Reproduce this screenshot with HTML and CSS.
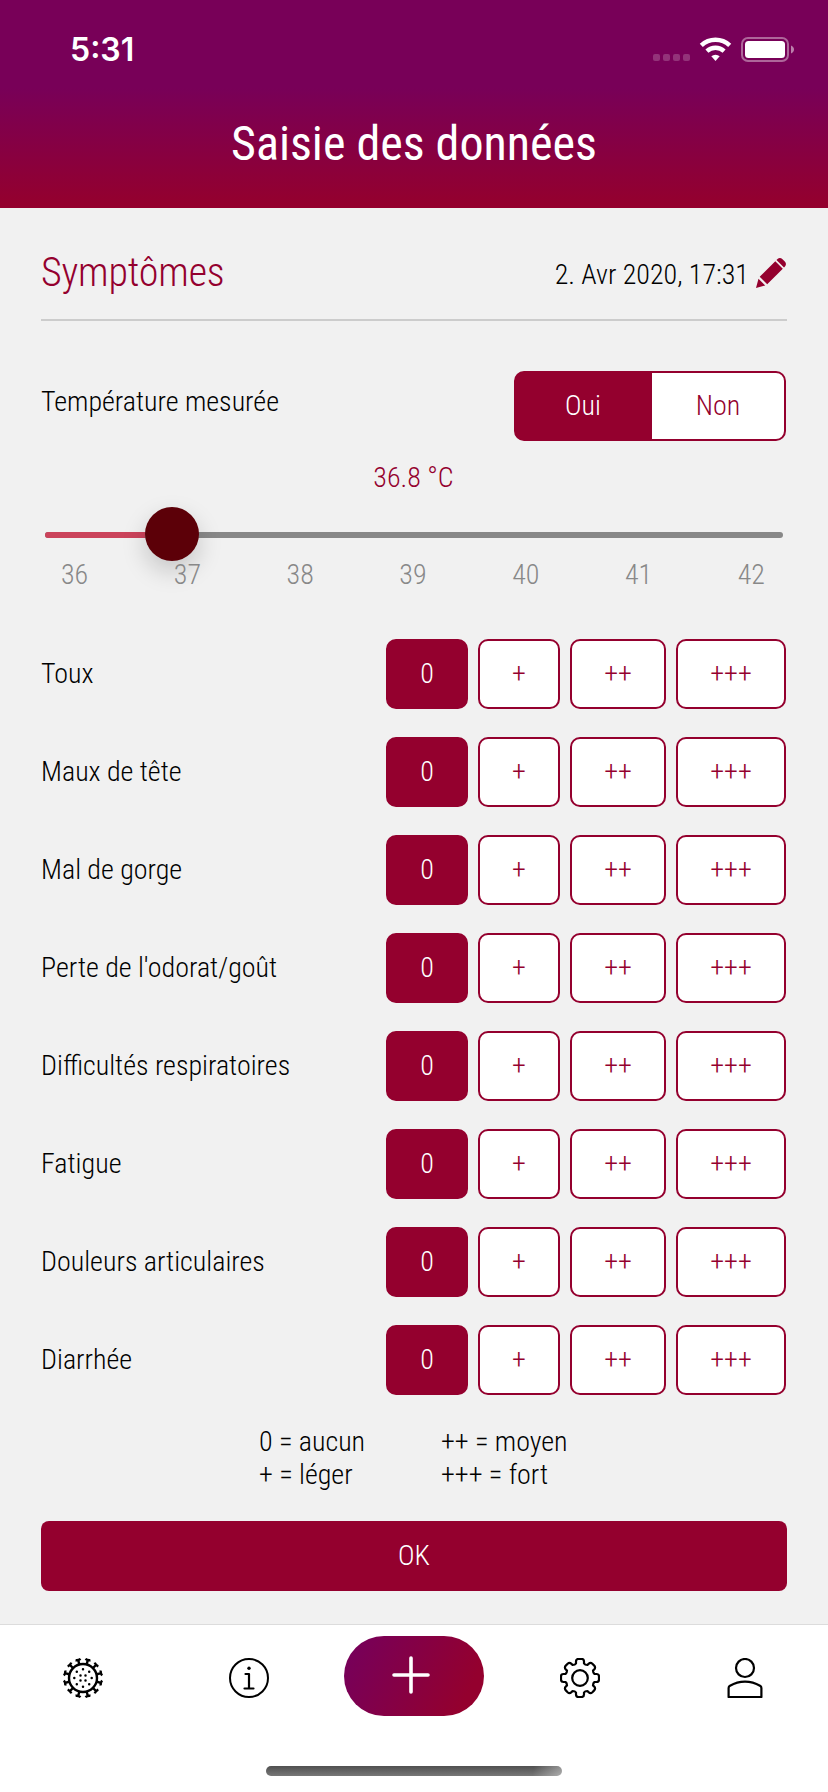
FILE: index.html
```html
<!DOCTYPE html>
<html lang="fr">
<head>
<meta charset="utf-8">
<title>Saisie des données</title>
<link rel="stylesheet" href="styles.css">
</head>
<body>
<header class="header">
  <div class="status">
    <span class="time">5:31</span>
    <svg class="status-icons" width="142" height="28" viewBox="0 0 142 28">
      <g fill="#fff" fill-opacity=".2"><rect x="0" y="17" width="7" height="7" rx="2"/><rect x="10" y="17" width="7" height="7" rx="2"/><rect x="20" y="17" width="7" height="7" rx="2"/><rect x="30" y="17" width="7" height="7" rx="2"/></g>
      <g fill="none" stroke="#fff" stroke-width="4.4"><path d="M48.3 8.4a20.500 20.500 0 0 1 28.400 0"/><path d="M53.900 14.100a12.600 12.600 0 0 1 17.200 0"/></g>
      <path d="M58.300 19.300a6.300 6.300 0 0 1 8.400 0L62.500 24z" fill="#fff"/>
      <rect x="89" y="1" width="46" height="23" rx="6" fill="none" stroke="#fff" stroke-opacity=".4" stroke-width="2"/>
      <rect x="92" y="4" width="40" height="17" rx="3.500" fill="#fff"/>
      <path d="M138 8.500c4 1.500 4 6.500 0 8z" fill="#fff" fill-opacity=".5"/>
    </svg>
  </div>
  <h1 class="title">Saisie des données</h1>
</header>
<main class="content">
  <div class="section-head">
    <h2 class="section-title">Symptômes</h2>
    <div class="date"><span>2. Avr 2020, 17:31</span>
      <svg width="30" height="30" viewBox="0 0 30 30" fill="#94002e"><path d="M2.500 20.800 9.200 27.500 0 30zM3.700 18.800 19.300 3.200 26.800 10.700 11.200 26.300zM20.500 2 21.500 1Q24-1 26.500 1.200L28.800 3.500Q31 6 29 8.500L28 9.500z"/></svg>
    </div>
  </div>
  <div class="temp-row">
    <span class="label">Température mesurée</span>
    <div class="toggle"><span class="half on">Oui</span><span class="half">Non</span></div>
  </div>
  <div class="temp-value">36.8 °C</div>
  <div class="slider"><div class="fill"></div><div class="thumb"></div></div>
  <div class="scale"><span>36</span><span>37</span><span>38</span><span>39</span><span>40</span><span>41</span><span>42</span></div>
  <div class="symptoms">
    <div class="row"><span class="label">Toux</span><b class="opt on">0</b><b class="opt">+</b><b class="opt">++</b><b class="opt">+++</b></div>
    <div class="row"><span class="label">Maux de tête</span><b class="opt on">0</b><b class="opt">+</b><b class="opt">++</b><b class="opt">+++</b></div>
    <div class="row"><span class="label">Mal de gorge</span><b class="opt on">0</b><b class="opt">+</b><b class="opt">++</b><b class="opt">+++</b></div>
    <div class="row"><span class="label">Perte de l'odorat/goût</span><b class="opt on">0</b><b class="opt">+</b><b class="opt">++</b><b class="opt">+++</b></div>
    <div class="row"><span class="label">Difficultés respiratoires</span><b class="opt on">0</b><b class="opt">+</b><b class="opt">++</b><b class="opt">+++</b></div>
    <div class="row"><span class="label">Fatigue</span><b class="opt on">0</b><b class="opt">+</b><b class="opt">++</b><b class="opt">+++</b></div>
    <div class="row"><span class="label">Douleurs articulaires</span><b class="opt on">0</b><b class="opt">+</b><b class="opt">++</b><b class="opt">+++</b></div>
    <div class="row"><span class="label">Diarrhée</span><b class="opt on">0</b><b class="opt">+</b><b class="opt">++</b><b class="opt">+++</b></div>
  </div>
  <div class="legend"><span>0 = aucun</span><span>++ = moyen</span><span>+ = léger</span><span>+++ = fort</span></div>
  <div class="ok">OK</div>
</main>
<nav class="tabs">
  <div class="tab">
    <svg width="40" height="40" viewBox="-20 -20 40 40">
      <defs><g id="spike"><path d="M0-14.500V-18.500M-2.600-19.100Q0-17.900 2.600-19.100" fill="none" stroke="#000" stroke-width="2.400"/></g></defs>
      <circle r="14" fill="none" stroke="#000" stroke-width="2.400"/>
      <g><use href="#spike" transform="rotate(15)"/><use href="#spike" transform="rotate(45)"/><use href="#spike" transform="rotate(75)"/><use href="#spike" transform="rotate(105)"/><use href="#spike" transform="rotate(135)"/><use href="#spike" transform="rotate(165)"/><use href="#spike" transform="rotate(195)"/><use href="#spike" transform="rotate(225)"/><use href="#spike" transform="rotate(255)"/><use href="#spike" transform="rotate(285)"/><use href="#spike" transform="rotate(315)"/><use href="#spike" transform="rotate(345)"/></g>
      <path d="M0-8.700h0M6.200-6.200h0M8.700 0h0M6.200 6.200h0M0 8.700h0M-6.200 6.200h0M-8.700 0h0M-6.200-6.200h0M-2.500-2.500h0M2.500-2.500h0M2.500 2.500h0M-2.500 2.500h0" stroke="#000" stroke-width="2.500" stroke-linecap="round"/>
    </svg>
  </div>
  <div class="tab tab-info">
    <svg width="40" height="40" viewBox="-20 -20 40 40"><circle r="19" fill="none" stroke="#000" stroke-width="2"/><circle cx="0" cy="-9.800" r="1.700"/><path d="M-3.500-4H0V10.500M-4.500 10.500H4.500" fill="none" stroke="#000" stroke-width="2.200" stroke-linecap="round" stroke-linejoin="round"/></svg>
  </div>
  <div class="tab"><div class="add"><svg width="38" height="38" viewBox="0 0 38 38"><path d="M19 2V36M2 19H36" stroke="#fff" stroke-width="3.600" stroke-linecap="round"/></svg></div></div>
  <div class="tab">
    <svg width="40" height="40" viewBox="-20 -20 40 40" fill="none" stroke="#000" stroke-width="2.200" stroke-linejoin="round"><circle r="7.800"/><path d="M-4-14.500V-16.500Q-4-19-1.500-19H1.500Q4-19 4-16.500V-14.500Q5-13 7.400-13L8.800-14.400Q10.600-15.800 12.400-14.200L14.200-12.400Q15.800-10.600 14.400-8.800L13-7.400Q13-5 14.500-4H16.500Q19-4 19-1.500V1.500Q19 4 16.500 4H14.500Q13 5 13 7.400L14.400 8.800Q15.800 10.600 14.200 12.400L12.400 14.200Q10.600 15.800 8.800 14.400L7.400 13Q5 13 4 14.500V16.500Q4 19 1.500 19H-1.500Q-4 19-4 16.500V14.500Q-5 13-7.400 13L-8.800 14.400Q-10.600 15.800-12.400 14.200L-14.200 12.400Q-15.800 10.600-14.400 8.800L-13 7.400Q-13 5-14.500 4H-16.500Q-19 4-19 1.500V-1.500Q-19-4-16.500-4H-14.500Q-13-5-13-7.400L-14.400-8.800Q-15.800-10.600-14.200-12.400L-12.400-14.200Q-10.600-15.800-8.800-14.400L-7.400-13Q-5-13-4-14.500z"/></svg>
  </div>
  <div class="tab">
    <svg width="40" height="40" viewBox="-20 -20 40 40" fill="none" stroke="#000" stroke-width="2.200" stroke-linejoin="round"><circle cy="-10" r="9"/><path d="M-16.400 19V10Q-16.400 8.500-15 7.700Q-8 3.600 0 3.600T15 7.700Q16.400 8.500 16.400 10V19z"/></svg>
  </div>
  <div class="home"></div>
</nav>
</body>
</html>
```
FILE: styles.css
```css
* { box-sizing: border-box; }
body {
  margin: 0;
  width: 828px;
  height: 1792px;
  overflow: hidden;
  display: flex;
  flex-direction: column;
  background: #f1f1f1;
  color: #000;
  font: 300 28px/34px "Roboto Condensed", Roboto, sans-serif;
  font-stretch: 75%;
}
.header {
  height: 208px;
  color: #fff;
  background: linear-gradient(#780058 88px, #94002e 204px);
}
.status {
  height: 98px;
  padding: 33px 33px 0 70px;
  display: flex;
  justify-content: space-between;
}
.time { font: 600 32px/34px Inter, sans-serif; }
.status-icons { margin-top: 4px; }
.title {
  margin: 18px 0 0;
  font-size: 48px;
  line-height: 56px;
  font-weight: 400;
  text-align: center;
}
.content {
  height: 1416px;
  padding: 0 41px;
  display: flex;
  flex-direction: column;
}
.section-head {
  height: 113px;
  padding-top: 41px;
  border-bottom: 2px solid #ccc;
  display: flex;
  justify-content: space-between;
}
.section-title {
  margin: 0;
  font-size: 40px;
  line-height: 48px;
  font-weight: 300;
  letter-spacing: -.15px;
  color: #94002e;
}
.date { display: flex; gap: 7px; padding: 9px 1px 0 0; }
.temp-row {
  margin-top: 50px;
  height: 70px;
  padding-right: 1px;
  display: flex;
  justify-content: space-between;
}
.temp-row .label { padding-top: 14px; }
.toggle {
  width: 272px;
  display: flex;
  border: 2px solid #94002e;
  border-radius: 10px;
  overflow: hidden;
  background: linear-gradient(90deg, #94002e 50%, #fff 50%);
  color: #94002e;
}
.half { flex: 0 0 136px; padding-right: 2px; line-height: 66px; text-align: center; }
.half + .half { flex-basis: 132px; padding-right: 0; }
.on { background: #94002e; color: #fff; }
.temp-value { margin-top: 20px; padding-right: 1px; color: #94002e; text-align: center; }
.slider {
  margin: 37px 4px 0;
  height: 6px;
  border-radius: 3px;
  background: #888;
  display: flex;
  align-items: center;
}
.fill { flex: 0 0 100px; height: 6px; border-radius: 3px 0 0 3px; background: #cb435b; }
.thumb {
  flex: 0 0 54px;
  height: 54px;
  margin-top: -2px;
  border-radius: 50%;
  background: #5c0008;
  box-shadow: 0 10px 24px rgba(0, 0, 0, .18);
}
.scale {
  margin: 20px 0 0 17px;
  width: 734px;
  display: flex;
  justify-content: space-between;
  padding: 0 27px 0 3px;
  color: #888;
}
.symptoms { margin-top: 47px; display: flex; flex-direction: column; gap: 28px; }
.row {
  height: 70px;
  padding-right: 1px;
  display: grid;
  grid-template-columns: 335px 82px 82px 96px 110px;
  column-gap: 10px;
  line-height: 66px;
}
.row .label { line-height: 70px; }
.opt {
  border: 2px solid #94002e;
  border-radius: 10px;
  background: #fff;
  color: #94002e;
  font-weight: 300;
  text-align: center;
}
.opt.on { background: #94002e; color: #fff; }
.legend {
  margin: 30px 0 0 218px;
  display: grid;
  grid-template-columns: 182px 200px;
  line-height: 33px;
}
.ok {
  margin-top: 30px;
  height: 70px;
  border-radius: 8px;
  background: #94002e;
  color: #fff;
  line-height: 70px;
  text-align: center;
}
.tabs {
  position: relative;
  height: 168px;
  border-top: 1px solid #dcdcdc;
  background: #fff;
  display: grid;
  grid-template-columns: repeat(5, 1fr);
}
.tab { height: 106px; display: flex; align-items: center; justify-content: center; }
.tab-info { padding-left: 1px; }
.add {
  flex: 0 0 140px;
  height: 80px;
  margin-top: -4px;
  border-radius: 40px;
  background: linear-gradient(115deg, #780058 10%, #94002e 85%);
  display: flex;
  align-items: center;
  justify-content: center;
}
.add svg { margin: -2px 6px 0 0; }
.home {
  position: absolute;
  left: 266px;
  top: 141px;
  width: 296px;
  height: 10px;
  border-radius: 5px;
  background: linear-gradient(100deg, transparent 90%, rgba(255, 255, 255, .4)), linear-gradient(#505050, #777);
}
```
